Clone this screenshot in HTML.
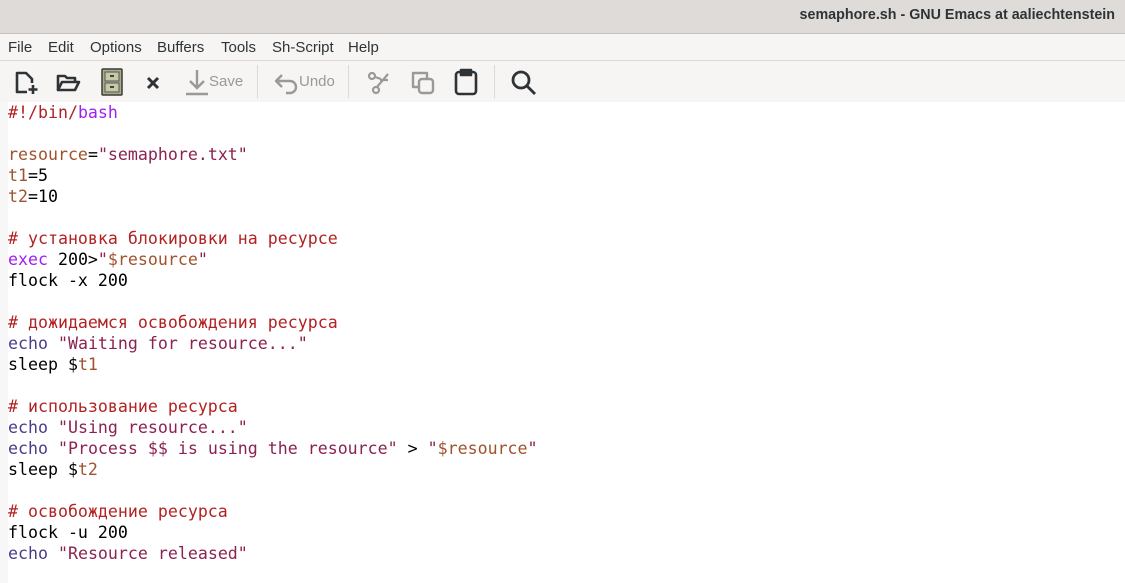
<!DOCTYPE html>
<html><head><meta charset="utf-8"><style>
*{margin:0;padding:0;box-sizing:border-box}
body{width:1125px;height:583px;overflow:hidden;background:#fff;font-family:"Liberation Sans","DejaVu Sans",sans-serif;position:relative}
#title{position:absolute;left:0;top:0;width:1125px;height:34px;background:#dedbd8;border-bottom:1px solid #c8c2bc}
#title span{position:absolute;right:10px;top:7px;font-weight:bold;font-size:14.3px;color:#2e3436;font-family:"Liberation Sans",sans-serif}
#menu{position:absolute;left:0;top:34px;width:1125px;height:27px;background:#f6f5f4;border-bottom:1px solid #dcdad7;font-size:15px;color:#2e3436;font-family:"Liberation Sans",sans-serif}
#menu span{position:absolute;top:5px}
#tool{position:absolute;left:0;top:61px;width:1125px;height:41px;background:#f6f5f4}
.sep{position:absolute;top:65px;width:1px;height:33px;background:#dcdad7}
.tl{position:absolute;top:73px;font-size:15px;color:#9a9996;font-family:"Liberation Sans",sans-serif}
#fringe{position:absolute;left:0;top:102px;width:8px;height:481px;background:#f7f7f7}
#code{position:absolute;left:8px;top:102px;font-family:"DejaVu Sans Mono","Liberation Mono",monospace;font-size:16.6px;line-height:21px;color:#000;white-space:pre}
.c{color:#b22222}.s{color:#8b2252}.v{color:#a0522d}.k{color:#a020f0}.b{color:#483d8b}
</style></head><body>
<div id="title"><span>semaphore.sh - GNU Emacs at aaliechtenstein</span></div>
<div id="menu"><span style="left:8px">File</span><span style="left:48px">Edit</span><span style="left:90px">Options</span><span style="left:157px">Buffers</span><span style="left:221px">Tools</span><span style="left:272px">Sh-Script</span><span style="left:348px">Help</span></div>
<div id="tool"></div>
<svg style="position:absolute;left:14px;top:70px" width="26" height="26" viewBox="0 0 26 26" fill="none" stroke="#2e3436" stroke-width="2.6" stroke-linejoin="round"><path d="M13 22H3V3h9l6 6v4"/><path d="M19 15v9M14.5 19.5h9"/></svg>
<svg style="position:absolute;left:55px;top:70px" width="28" height="26" viewBox="0 0 28 26" fill="none" stroke="#2e3436" stroke-width="2.6" stroke-linejoin="round"><path d="M3 20V6h7l2 2h8v4"/><path d="M3 20l4-8h17l-4 8z"/></svg>
<svg style="position:absolute;left:101px;top:68px" width="22" height="28" viewBox="0 0 22 28"><rect x="1" y="1" width="20" height="26" rx="1" fill="#a8ad8a" stroke="#3b3b30" stroke-width="1.5"/><rect x="4" y="4" width="14" height="9" fill="#c5c9a6" stroke="#555" stroke-width="1"/><rect x="4" y="15" width="14" height="9" fill="#c5c9a6" stroke="#555" stroke-width="1"/><rect x="9" y="7" width="4" height="2" fill="#444"/><rect x="9" y="18" width="4" height="2" fill="#444"/></svg>
<svg style="position:absolute;left:145px;top:75px" width="16" height="16" viewBox="0 0 16 16" stroke="#2e3436" stroke-width="3"><path d="M3 3l10 10M13 3L3 13"/></svg>
<svg style="position:absolute;left:185px;top:68px" width="24" height="28" viewBox="0 0 24 28" fill="none" stroke="#9a9996" stroke-width="2.4"><path d="M12 2v18M5 13l7 7 7-7"/><path d="M1 26h22"/></svg>
<span class="tl" style="left:209px">Save</span>
<div class="sep" style="left:257px"></div>
<svg style="position:absolute;left:274px;top:71px" width="26" height="24" viewBox="0 0 26 24" fill="none" stroke="#9a9996" stroke-width="2.4" stroke-linejoin="round"><path d="M8 4L2 10l6 6"/><path d="M2 10h14a6 6 0 0 1 0 12h-4"/></svg>
<span class="tl" style="left:299px">Undo</span>
<div class="sep" style="left:348px"></div>
<svg style="position:absolute;left:366px;top:71px" width="24" height="24" viewBox="0 0 24 24" fill="none" stroke="#9a9996" stroke-width="2.2"><circle cx="6" cy="5" r="3"/><circle cx="10" cy="19" r="3"/><path d="M9 6l6 2M22 3L11 16M14 9h8"/></svg>
<svg style="position:absolute;left:410px;top:70px" width="26" height="26" viewBox="0 0 26 26" fill="none" stroke="#9a9996" stroke-width="2.4" stroke-linejoin="round"><path d="M9 17H3V3h14v6"/><rect x="9" y="9" width="14" height="14" rx="3"/></svg>
<svg style="position:absolute;left:454px;top:68px" width="24" height="28" viewBox="0 0 24 28" fill="none" stroke="#2e3436" stroke-width="2.6" stroke-linejoin="round"><rect x="2" y="4" width="20" height="22" rx="3"/><path d="M7 2h10v5H7z" fill="#2e3436"/></svg>
<div class="sep" style="left:494px"></div>
<svg style="position:absolute;left:511px;top:70px" width="26" height="26" viewBox="0 0 26 26" fill="none" stroke="#2e3436" stroke-width="2.8"><circle cx="10" cy="10" r="8"/><path d="M16 16l8 8"/></svg>
<div id="fringe"></div>
<div id="code"><span class="c">#!/bin/</span><span class="k">bash</span>

<span class="v">resource</span>=<span class="s">"semaphore.txt"</span>
<span class="v">t1</span>=5
<span class="v">t2</span>=10

<span class="c"># установка блокировки на ресурсе</span>
<span class="k">exec</span> 200&gt;<span class="s">"</span><span class="v">$resource</span><span class="s">"</span>
flock -x 200

<span class="c"># дожидаемся освобождения ресурса</span>
<span class="b">echo</span> <span class="s">"Waiting for resource..."</span>
sleep $<span class="v">t1</span>

<span class="c"># использование ресурса</span>
<span class="b">echo</span> <span class="s">"Using resource..."</span>
<span class="b">echo</span> <span class="s">"Process $$ is using the resource"</span> &gt; <span class="s">"</span><span class="v">$resource</span><span class="s">"</span>
sleep $<span class="v">t2</span>

<span class="c"># освобождение ресурса</span>
flock -u 200
<span class="b">echo</span> <span class="s">"Resource released"</span></div>
</body></html>
